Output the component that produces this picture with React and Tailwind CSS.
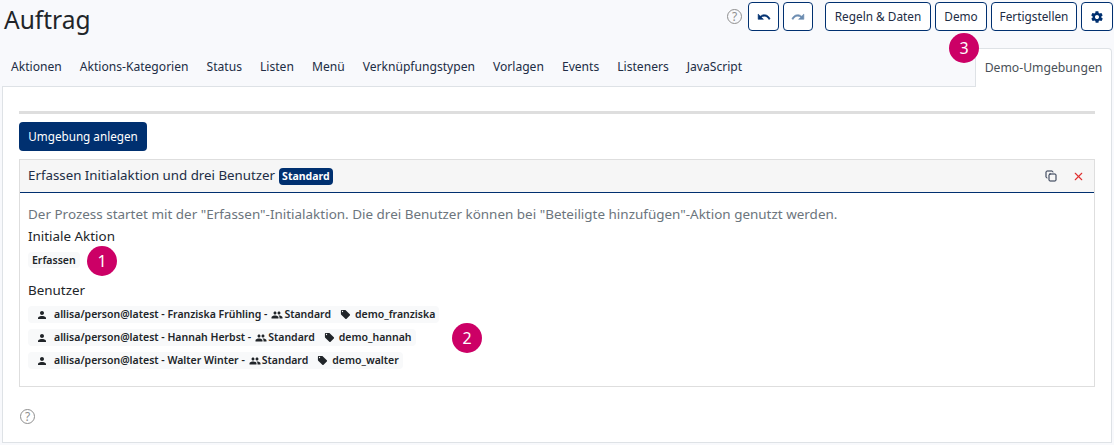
import { Copy, X } from 'lucide-react';

const tabs = ['Aktionen', 'Aktions-Kategorien', 'Status', 'Listen', 'Menü', 'Verknüpfungstypen', 'Vorlagen', 'Events', 'Listeners', 'JavaScript'];

const users = [
  { name: 'Franziska Frühling', tag: 'demo_franziska' },
  { name: 'Hannah Herbst', tag: 'demo_hannah' },
  { name: 'Walter Winter', tag: 'demo_walter' },
];

const HelpIcon = () => (
  <span className="flex h-[15px] w-[15px] items-center justify-center rounded-full border-[1.5px] border-[#8f8f8f] text-[12px] leading-none text-[#8f8f8f]">?</span>
);

const PersonIcon = () => (
  <svg viewBox="0 0 24 24" className="h-[12px] w-[12px] fill-[#212529]"><path d="M12 12c2.200 0 4-1.800 4-4s-1.800-4-4-4-4 1.800-4 4 1.800 4 4 4zm0 2c-2.700 0-8 1.300-8 4v2h16v-2c0-2.700-5.300-4-8-4z" /></svg>
);

const GroupIcon = () => (
  <svg viewBox="0 0 24 24" className="-mr-[3px] h-[12px] w-[12px] fill-[#212529]"><path d="M16 11c1.700 0 3-1.300 3-3s-1.300-3-3-3-3 1.300-3 3 1.300 3 3 3zm-8 0c1.700 0 3-1.300 3-3S9.700 5 8 5 5 6.300 5 8s1.300 3 3 3zm0 2c-2.300 0-7 1.200-7 3.500V19h14v-2.500C15 14.200 10.300 13 8 13zm8 0h-1c1.200.8 2 2 2 3.500V19h6v-2.500c0-2.300-4.700-3.500-7-3.500z" /></svg>
);

const TagIcon = () => (
  <svg viewBox="0 0 24 24" className="h-[11px] w-[11px] fill-[#212529]"><path d="M21.400 11.600l-9-9C12 2.200 11.500 2 11 2H4c-1.100 0-2 .9-2 2v7c0 .6.200 1.100.6 1.400l9 9c.4.400.9.600 1.400.600s1-.2 1.400-.6l7-7c.4-.4.600-.9.600-1.400s-.2-1-.6-1.400zM5.500 7C4.700 7 4 6.300 4 5.500S4.700 4 5.500 4 7 4.700 7 5.500 6.300 7 5.500 7z" /></svg>
);

const UndoIcon = () => (
  <svg viewBox="0 0 24 24" className="h-[14px] w-[14px] fill-[#003070]"><path d="M12.500 8c-2.650 0-5.050.99-6.900 2.600L2 7v9h9l-3.620-3.620c1.390-1.160 3.160-1.880 5.120-1.880 3.540 0 6.550 2.310 7.600 5.500l2.370-.78C21.080 11.030 17.150 8 12.500 8z" stroke="#003070" strokeWidth="1" /></svg>
);

const RedoIcon = () => (
  <svg viewBox="0 0 24 24" className="h-[14px] w-[14px] fill-[#6a8bb0]"><path d="M18.400 10.600C16.550 8.990 14.150 8 11.500 8c-4.650 0-8.580 3.030-9.960 7.220L3.900 16c1.050-3.190 4.050-5.500 7.600-5.500 1.950 0 3.730.72 5.120 1.880L13 16h9V7l-3.600 3.600z" stroke="#6a8bb0" strokeWidth="1" /></svg>
);

const GearIcon = () => (
  <svg viewBox="0 0 24 24" className="h-[14px] w-[14px] fill-[#003070]"><path d="M19.400 13c.1-.3.100-.7.100-1s0-.7-.1-1l2.100-1.600c.2-.1.200-.4.100-.6l-2-3.500c-.1-.2-.4-.3-.6-.2l-2.500 1c-.5-.4-1.100-.7-1.700-1l-.4-2.700c0-.2-.2-.4-.5-.4h-4c-.3 0-.5.200-.5.400l-.4 2.700c-.6.300-1.200.6-1.700 1l-2.500-1c-.2-.1-.5 0-.6.200l-2 3.500c-.1.200-.1.500.1.600L4.600 11c-.1.300-.1.700-.1 1s0 .7.100 1l-2.100 1.600c-.2.100-.2.400-.1.600l2 3.500c.1.200.4.300.6.200l2.500-1c.5.400 1.100.7 1.700 1l.4 2.700c0 .2.200.4.500.4h4c.3 0 .5-.2.500-.4l.4-2.700c.6-.3 1.200-.6 1.700-1l2.500 1c.2.100.5 0 .6-.2l2-3.500c.1-.2.100-.5-.1-.6L19.400 13zM12 15.500c-1.900 0-3.500-1.600-3.500-3.500s1.600-3.500 3.500-3.500 3.500 1.600 3.500 3.500-1.600 3.500-3.500 3.500z" /></svg>
);

const Marker = ({ className, children }) => (
  <span className={`absolute flex h-[30px] w-[30px] items-center justify-center rounded-full bg-[#cc0066] text-[16px] leading-none text-white ${className}`}>{children}</span>
);

const OutlineButton = ({ children, className = '' }) => (
  <button className={`flex h-[29px] items-center justify-center rounded-[4px] border border-[#003070] bg-white text-[11.800px] text-[#212d45] ${className}`}>{children}</button>
);

export default function App() {
  return (
    <div className="relative flex h-[445px] w-[1114px] flex-col overflow-hidden bg-[#f8f9fc] font-['Noto_Sans','Open_Sans',sans-serif] text-[#212529]">
      {/* Header */}
      <div className="flex h-[48px] items-start justify-between pl-[4px] pr-[1px] pt-[2px]">
        <h1 className="text-[24.500px] font-normal leading-[36px]">Auftrag</h1>
        <div className="flex items-center">
          <HelpIcon />
          <OutlineButton className="ml-[6px] w-[31px]"><UndoIcon /></OutlineButton>
          <OutlineButton className="ml-[4px] w-[30px] border-[#6a8bb0]"><RedoIcon /></OutlineButton>
          <OutlineButton className="ml-[12px] w-[106px]">Regeln &amp; Daten</OutlineButton>
          <OutlineButton className="ml-[4px] w-[52px]">Demo</OutlineButton>
          <OutlineButton className="ml-[4px] w-[86px]">Fertigstellen</OutlineButton>
          <OutlineButton className="ml-[4px] w-[32px]"><GearIcon /></OutlineButton>
        </div>
      </div>

      {/* Tabs */}
      <div className="flex h-[39px] pl-[2px] pr-[2px]">
        <div className="flex flex-1 items-center gap-[18px] border-b border-[#dee2e6] pl-[9px] text-[12.100px] text-[#212d45]">
          {tabs.map(t => <span key={t}>{t}</span>)}
        </div>
        <div className="flex w-[137px] items-center justify-center rounded-t-[4px] border border-b-0 border-[#dee2e6] bg-white text-[12.200px] text-[#495057]">Demo-Umgebungen</div>
      </div>

      {/* Panel */}
      <div className="mx-[2px] flex h-[356px] flex-col border border-t-0 border-[#dee2e6] bg-white px-[16px] pt-[24px]">
        <div className="h-[3px] bg-[#dedede]" />
        <button className="mt-[8px] h-[29px] w-[128px] rounded-[4px] bg-[#003070] text-[11.700px] text-white">Umgebung anlegen</button>

        <div className="mt-[8px] border border-[#dedede]">
          <div className="flex h-[33px] items-center justify-between border-b border-[#003070] bg-[#f6f6f6] pl-[8px] pr-[9px]">
            <div className="flex items-center gap-[4px] text-[13.300px] text-[#212d45]">
              <span>Erfassen Initialaktion und drei Benutzer</span>
              <span className="rounded-[4px] bg-[#003070] px-[3px] py-[1px] text-[10.500px] font-bold leading-[15px] text-white">Standard</span>
            </div>
            <div className="flex items-center gap-[15px]">
              <Copy size={12} strokeWidth={2} className="text-[#212d45]" />
              <X size={13} strokeWidth={2} className="text-[#e03030]" />
            </div>
          </div>
          <div className="h-[193px] px-[8px] pt-[12px]">
            <p className="text-[13.460px] leading-[18px] text-[#6c757d]">Der Prozess startet mit der "Erfassen"-Initialaktion. Die drei Benutzer können bei "Beteiligte hinzufügen"-Aktion genutzt werden.</p>
            <p className="mt-[4px] text-[13.400px] leading-[18px]">Initiale Aktion</p>
            <div className="mt-[7px] flex">
              <span className="rounded-[4px] bg-[#f8f9fa] px-[4px] text-[10.500px] font-semibold leading-[16px]">Erfassen</span>
            </div>
            <p className="mt-[13px] text-[13.400px] leading-[18px]">Benutzer</p>
            <div className="mt-[7px] flex flex-col items-start gap-[6px]">
              {users.map(u => (
                <div key={u.tag} className="flex h-[17px] items-center gap-[9px] rounded-[4px] bg-[#f8f9fa] pl-[8px] pr-[4px] text-[10.500px] font-semibold">
                  <span className="flex items-center gap-[4px]">
                    <span className="mr-[2px]"><PersonIcon /></span>
                    allisa/person@latest - {u.name} - <GroupIcon /> Standard
                  </span>
                  <span className="flex items-center gap-[4px]"><TagIcon />{u.tag}</span>
                </div>
              ))}
            </div>
          </div>
        </div>

        <div className="mt-[22px] pl-[1px]"><HelpIcon /></div>
      </div>

      <Marker className="left-[87px] top-[246px]">1</Marker>
      <Marker className="left-[452px] top-[323px]">2</Marker>
      <Marker className="left-[949px] top-[33px]">3</Marker>
    </div>
  );
}
